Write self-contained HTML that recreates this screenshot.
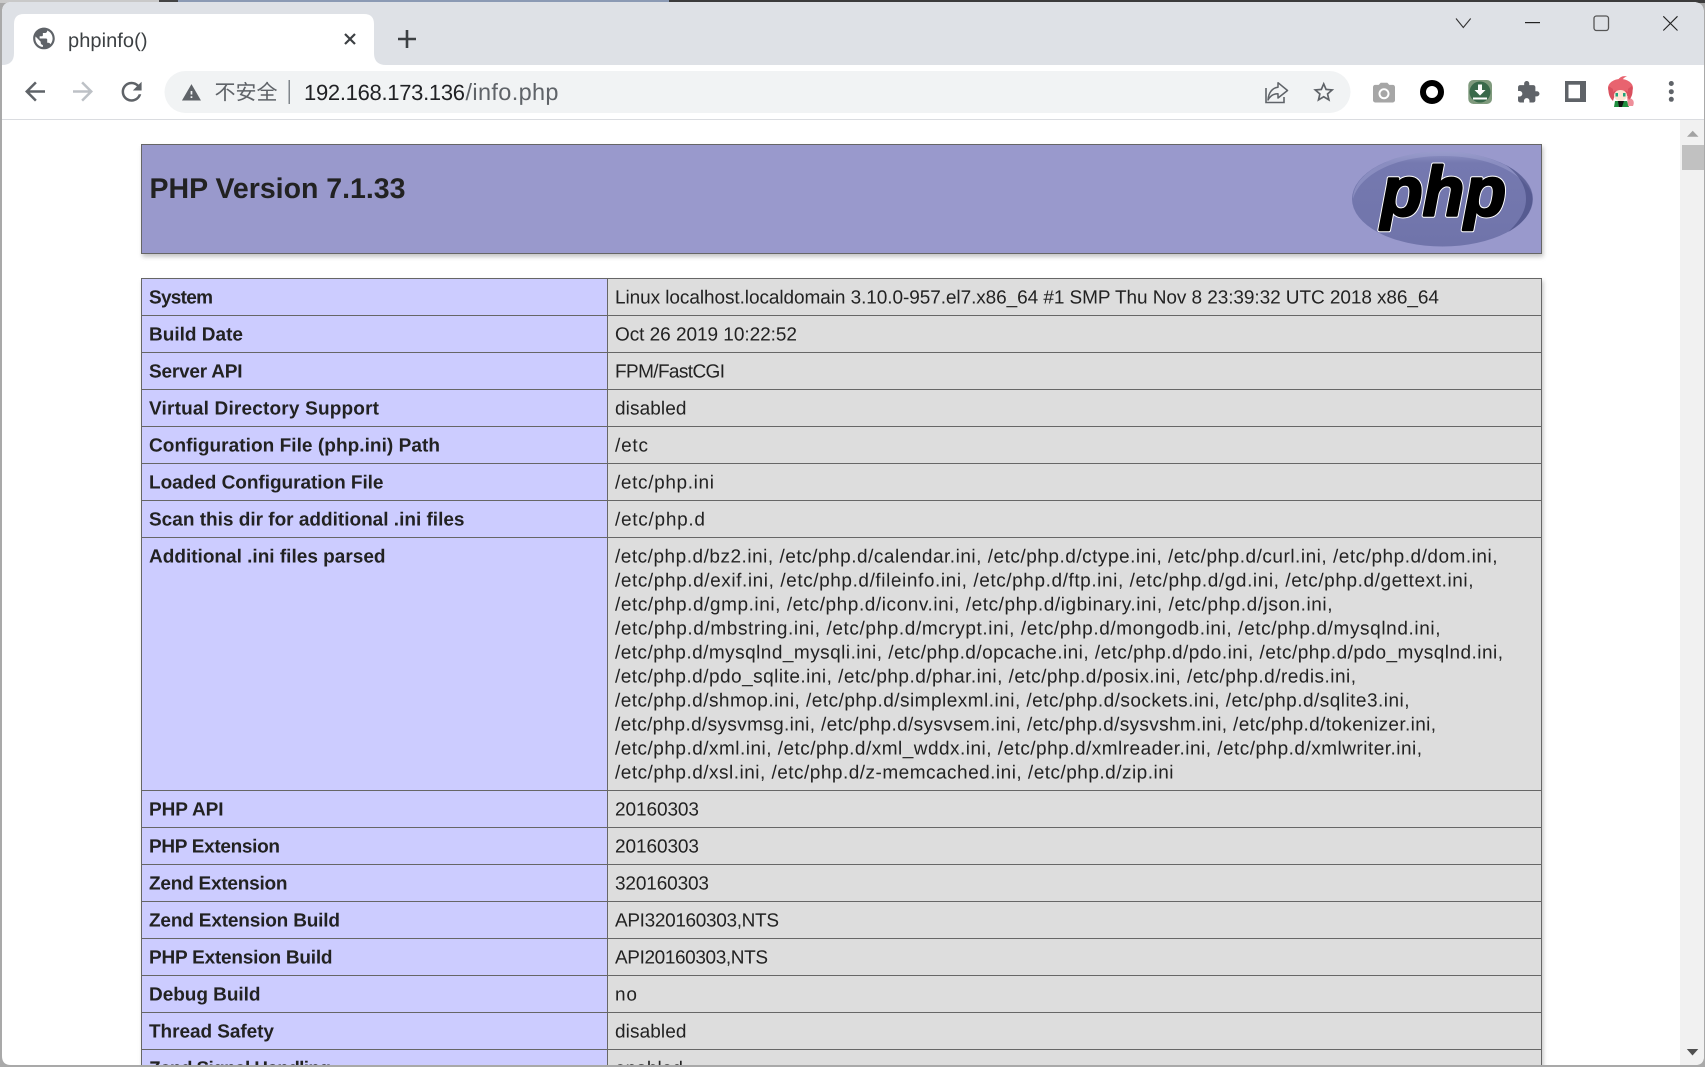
<!DOCTYPE html>
<html lang="en"><head><meta charset="utf-8"><title>phpinfo()</title>
<style>
html,body{margin:0;padding:0;width:1705px;height:1067px;overflow:hidden;background:#a9a9a9}
svg{display:block}
text{font-family:"Liberation Sans","Noto Sans CJK SC",sans-serif;text-rendering:geometricPrecision}
.e{font-size:19px;font-weight:bold;fill:#222;transform:translateY(.7px)}
.v{font-size:19px;fill:#222;transform:translateY(.7px)}
</style></head><body>
<svg width="1705" height="1067" viewBox="0 0 1705 1067" xmlns="http://www.w3.org/2000/svg">
<defs>
<clipPath id="win"><path d="M12 2H1693Q1704 2 1704 13V1056Q1704 1065 1695 1065H11Q2 1065 2 1056V12Q2 2 12 2Z"/></clipPath>
<filter id="sh" x="-2%" y="-5%" width="104%" height="115%"><feDropShadow dx="1.4" dy="2.8" stdDeviation="2" flood-color="#c4c4c4"/></filter>
<linearGradient id="lg" x1="0" y1="0" x2="0" y2="1"><stop offset="0" stop-color="#8f93c4"/><stop offset=".12" stop-color="#7579b0"/><stop offset="1" stop-color="#7074aa"/></linearGradient>
</defs>
<rect x="0" y="0" width="1705" height="1067" fill="#a9a9a9"/>
<rect x="0" y="0" width="159" height="3" fill="#c9c9c9"/>
<rect x="159" y="0" width="19" height="3" fill="#444"/>
<rect x="178" y="0" width="491" height="3" fill="#8b9ab4"/>
<rect x="669" y="0" width="1036" height="3" fill="#3b3b3b"/>
<g clip-path="url(#win)">
<rect x="0" y="0" width="1705" height="1067" fill="#fff"/>
<rect x="0" y="0" width="1705" height="65" fill="#dee1e6"/>
<path d="M2 65Q14 65 14 53V24Q14 14 24 14H364Q374 14 374 24V53Q374 65 386 65Z" fill="#fff"/>
<rect x="0" y="119" width="1705" height="1" fill="#dadce0"/>
<rect x="164.500" y="71" width="1186" height="42" rx="21" fill="#f1f3f4"/>

<!-- tab -->
<path transform="translate(31 25.500) scale(1.08)" fill="#5f6368" d="M12 2C6.480 2 2 6.480 2 12s4.480 10 10 10 10-4.480 10-10S17.520 2 12 2zm-1 17.930c-3.950-.490-7-3.850-7-7.930 0-.620.080-1.210.210-1.790L9 15v1c0 1.100.900 2 2 2v1.930zm6.900-2.540c-.260-.810-1-1.390-1.900-1.390h-1v-3c0-.550-.450-1-1-1H8v-2h2c.550 0 1-.450 1-1V7h2c1.100 0 2-.900 2-2v-.410c2.930 1.190 5 4.060 5 7.410 0 2.080-.800 3.970-2.100 5.390z"/>
<text x="68" y="47" font-size="20" fill="#3c4043" textLength="79.500">phpinfo()</text>
<path d="M345 34L355 44M355 34L345 44" stroke="#3c4043" stroke-width="2.200" fill="none"/>
<path d="M407 30V48M398 39H416" stroke="#3c4043" stroke-width="2.600" fill="none"/>

<!-- nav -->
<path transform="translate(20 76.500) scale(1.25)" fill="#5f6368" d="M20 11H7.830l5.590-5.590L12 4l-8 8 8 8 1.410-1.410L7.830 13H20v-2z"/>
<path transform="translate(98 76.500) scale(-1.25 1.25)" fill="#bdc1c6" d="M20 11H7.830l5.590-5.590L12 4l-8 8 8 8 1.410-1.410L7.830 13H20v-2z"/>
<path transform="translate(116.600 76.700) scale(1.25)" fill="#5f6368" d="M17.650 6.350C16.200 4.900 14.210 4 12 4c-4.420 0-7.990 3.580-7.990 8s3.570 8 7.990 8c3.730 0 6.840-2.550 7.730-6h-2.080c-.820 2.330-3.040 4-5.650 4-3.310 0-6-2.690-6-6s2.690-6 6-6c1.660 0 3.140.690 4.220 1.780L13 11h7V4l-2.350 2.350z"/>

<!-- omnibox -->
<path transform="translate(181.100 82.400) scale(.864)" fill="#5f6368" d="M1 21h22L12 2 1 21zm12-3h-2v-2h2v2zm0-4h-2v-4h2v4z"/>
<text x="214.500" y="99.500" font-size="21" fill="#5f6368" textLength="63">不安全</text>
<rect x="288.500" y="80" width="1.500" height="24" fill="#80868b"/>
<text x="304" y="100" font-size="22" fill="#202124" textLength="161">192.168.173.136</text>
<text x="465.500" y="100" font-size="23.500" fill="#5f6368" textLength="93">/info.php</text>
<path d="M1266 88V102.500H1284V97" fill="none" stroke="#5f6368" stroke-width="1.600"/>
<path d="M1278 82.700L1287.500 90.500L1278 98V93.700C1273 93.700 1270 96 1268 100C1268.500 92.500 1272.500 87.700 1278 87.200Z" fill="none" stroke="#5f6368" stroke-width="1.500" stroke-linejoin="round"/>
<path transform="translate(1311.100 79.600) scale(1.05)" fill="#5f6368" d="M22 9.240l-7.190-.620L12 2 9.190 8.630 2 9.240l5.460 4.730L5.820 21 12 17.270 18.180 21l-1.630-7.030L22 9.240zM12 15.400l-3.760 2.270 1-4.280-3.320-2.880 4.380-.380L12 6.100l1.710 4.040 4.380.380-3.320 2.880 1 4.280L12 15.400z"/>

<!-- extensions -->
<g transform="translate(1370.800 80.500) scale(1.1)" fill="#a6a6a6"><path d="M9 2 7.170 4H4c-1.100 0-2 .900-2 2v12c0 1.100.900 2 2 2h16c1.100 0 2-.900 2-2V6c0-1.100-.900-2-2-2h-3.170L15 2H9zm3 15c-2.760 0-5-2.240-5-5s2.240-5 5-5 5 2.240 5 5-2.240 5-5 5z" fill-rule="evenodd"/><circle cx="12" cy="12" r="3.200"/></g>
<circle cx="1432" cy="92" r="9" fill="none" stroke="#000" stroke-width="6"/>
<rect x="1468.300" y="80" width="23.700" height="24" rx="5" fill="#7f9a7d"/>
<circle cx="1480" cy="92" r="10.500" fill="#39694a"/>
<path d="M1478 84.500H1482V90H1485.500L1480 95.500L1474.500 90H1478Z" fill="#fff"/>
<rect x="1473" y="97.500" width="14" height="2" fill="#fff"/>
<path transform="translate(1516 80) scale(1.02)" fill="#5f6368" d="M20.500 11H19V7c0-1.100-.900-2-2-2h-4V3.500C13 2.120 11.880 1 10.500 1S8 2.120 8 3.500V5H4c-1.100 0-1.990.900-1.990 2v3.800H3.500c1.490 0 2.700 1.210 2.700 2.700s-1.210 2.700-2.700 2.700H2V20c0 1.100.900 2 2 2h3.800v-1.500c0-1.490 1.210-2.700 2.700-2.700 1.490 0 2.700 1.210 2.700 2.700V22H17c1.100 0 2-.900 2-2v-4h1.500c1.380 0 2.500-1.120 2.500-2.500S21.880 11 20.500 11z"/>
<rect x="1565" y="81" width="21" height="21" fill="#5f6368"/>
<rect x="1568.500" y="84.700" width="11.500" height="13.600" fill="#fff"/>

<!-- avatar -->
<path d="M1614 107L1615 101H1627L1629 107Z" fill="#1f8f3f"/>
<path d="M1618 101H1624L1622 107H1619Z" fill="#111"/>
<path d="M1627 97Q1636 99 1633 106L1628 106Z" fill="#ee8f9a"/>
<path d="M1618 80Q1621 75 1627 76.500Q1623 77.500 1622 81Z" fill="#e8636f"/>
<ellipse cx="1620.500" cy="88" rx="12.500" ry="9" fill="#e8636f"/>
<path d="M1608.500 86Q1607.500 96 1613 101L1616 91Z" fill="#d9505e"/>
<path d="M1632 86Q1634 95 1629 100L1625 91Z" fill="#d9505e"/>
<ellipse cx="1620.500" cy="95.500" rx="6.500" ry="5.500" fill="#fde3d3"/>
<path d="M1613 92Q1620 87 1628 92L1628 87L1620 83L1613 87Z" fill="#e8636f"/>
<rect x="1615.500" y="93" width="2.500" height="3.500" fill="#1fa37a"/>
<rect x="1623" y="93" width="2.500" height="3.500" fill="#1fa37a"/>

<circle cx="1671.300" cy="83.500" r="2.500" fill="#5f6368"/>
<circle cx="1671.300" cy="91.700" r="2.500" fill="#5f6368"/>
<circle cx="1671.300" cy="99.300" r="2.500" fill="#5f6368"/>

<!-- window controls -->
<path d="M1456 18.500L1463.300 27.500L1470.700 18.500" fill="none" stroke="#333" stroke-width="1.100"/>
<rect x="1525" y="22" width="15" height="1.200" fill="#222"/>
<rect x="1594" y="16" width="14.500" height="14.500" rx="2.500" fill="none" stroke="#555" stroke-width="1.300"/>
<path d="M1663.300 16.300L1677.500 30.500M1677.500 16.300L1663.300 30.500" fill="none" stroke="#222" stroke-width="1.100"/>

<!-- scrollbar -->
<rect x="1680" y="120" width="25" height="947" fill="#f1f1f1"/>
<path d="M1692.700 130.700L1698.500 136.700H1687Z" fill="#a3a3a3"/>
<rect x="1682" y="145" width="22" height="25" fill="#c1c1c1"/>
<path d="M1686.800 1049H1698.300L1692.500 1055.500Z" fill="#505050"/>

<!-- header -->
<rect x="141" y="144" width="1401" height="110" fill="#99c" filter="url(#sh)"/>
<rect x="141.500" y="144.500" width="1400" height="109" fill="#99c" stroke="#666" stroke-width="1"/>
<text x="149.500" y="198" font-size="28.500" font-weight="bold" fill="#222" textLength="256">PHP Version 7.1.33</text>

<!-- logo -->
<ellipse cx="1442.500" cy="199" rx="90.500" ry="47.500" fill="url(#lg)"/>
<path d="M1353 199C1353 173 1392 151.500 1442.500 151.500C1490 151.500 1527 171 1532 194C1522 172 1488 156 1442.500 156C1396 156 1360 174 1353 199Z" fill="#a3a7d4" opacity=".45"/>
<path d="M1532.500 199C1532.500 212 1523 224 1508 232C1519 222 1526 211 1526 199C1526 186 1519 175 1506 165C1522 174 1532.500 186 1532.500 199Z" fill="#45497f" opacity=".6"/>
<text x="1381" y="215.500" font-size="70" font-weight="bold" font-style="italic" fill="#fff" stroke="#fff" stroke-width="4.500" stroke-linejoin="round" textLength="125" lengthAdjust="spacingAndGlyphs">php</text>
<text x="1381" y="215.500" font-size="70" font-weight="bold" font-style="italic" fill="#000" stroke="#000" stroke-width="2.500" stroke-linejoin="round" textLength="125" lengthAdjust="spacingAndGlyphs">php</text>

<!-- table -->
<rect x="141" y="278" width="1401" height="800" fill="#ddd" filter="url(#sh)"/>
<rect x="141" y="278" width="466" height="800" fill="#ccf"/>
<rect x="607" y="278" width="935" height="800" fill="#ddd"/>
<path d="M141 278.500H1542M141 315.500H1542M141 352.500H1542M141 389.500H1542M141 426.500H1542M141 463.500H1542M141 500.500H1542M141 537.500H1542M141 790.500H1542M141 827.500H1542M141 864.500H1542M141 901.500H1542M141 938.500H1542M141 975.500H1542M141 1012.500H1542M141 1049.500H1542M141.500 278V1067M607.500 278V1067M1541.500 278V1067" stroke="#666" stroke-width="1" fill="none"/>

<text class="e" x="149" y="303" textLength="64">System</text>
<text class="e" x="149" y="340" textLength="94">Build Date</text>
<text class="e" x="149" y="377" textLength="93.500">Server API</text>
<text class="e" x="149" y="414" textLength="230">Virtual Directory Support</text>
<text class="e" x="149" y="451" textLength="291">Configuration File (php.ini) Path</text>
<text class="e" x="149" y="488" textLength="234.500">Loaded Configuration File</text>
<text class="e" x="149" y="525" textLength="315.500">Scan this dir for additional .ini files</text>
<text class="e" x="149" y="562" textLength="236.500">Additional .ini files parsed</text>
<text class="e" x="149" y="815" textLength="74.500">PHP API</text>
<text class="e" x="149" y="852" textLength="131">PHP Extension</text>
<text class="e" x="149" y="889" textLength="138.500">Zend Extension</text>
<text class="e" x="149" y="926" textLength="191">Zend Extension Build</text>
<text class="e" x="149" y="963" textLength="183.500">PHP Extension Build</text>
<text class="e" x="149" y="1000" textLength="111.500">Debug Build</text>
<text class="e" x="149" y="1037" textLength="125">Thread Safety</text>
<text class="e" x="149" y="1074" textLength="182">Zend Signal Handling</text>

<text class="v" x="615" y="303" textLength="824">Linux localhost.localdomain 3.10.0-957.el7.x86_64 #1 SMP Thu Nov 8 23:39:32 UTC 2018 x86_64</text>
<text class="v" x="615" y="340" textLength="182">Oct 26 2019 10:22:52</text>
<text class="v" x="615" y="377" textLength="110">FPM/FastCGI</text>
<text class="v" x="615" y="414" textLength="71.500">disabled</text>
<text class="v" x="615" y="451" textLength="33">/etc</text>
<text class="v" x="615" y="488" textLength="99">/etc/php.ini</text>
<text class="v" x="615" y="525" textLength="90">/etc/php.d</text>
<text class="v" x="615" y="562" textLength="882.500">/etc/php.d/bz2.ini, /etc/php.d/calendar.ini, /etc/php.d/ctype.ini, /etc/php.d/curl.ini, /etc/php.d/dom.ini,</text>
<text class="v" x="615" y="586" textLength="858.500">/etc/php.d/exif.ini, /etc/php.d/fileinfo.ini, /etc/php.d/ftp.ini, /etc/php.d/gd.ini, /etc/php.d/gettext.ini,</text>
<text class="v" x="615" y="610" textLength="717.500">/etc/php.d/gmp.ini, /etc/php.d/iconv.ini, /etc/php.d/igbinary.ini, /etc/php.d/json.ini,</text>
<text class="v" x="615" y="634" textLength="825.500">/etc/php.d/mbstring.ini, /etc/php.d/mcrypt.ini, /etc/php.d/mongodb.ini, /etc/php.d/mysqlnd.ini,</text>
<text class="v" x="615" y="658" textLength="888">/etc/php.d/mysqlnd_mysqli.ini, /etc/php.d/opcache.ini, /etc/php.d/pdo.ini, /etc/php.d/pdo_mysqlnd.ini,</text>
<text class="v" x="615" y="682" textLength="741">/etc/php.d/pdo_sqlite.ini, /etc/php.d/phar.ini, /etc/php.d/posix.ini, /etc/php.d/redis.ini,</text>
<text class="v" x="615" y="706" textLength="794.500">/etc/php.d/shmop.ini, /etc/php.d/simplexml.ini, /etc/php.d/sockets.ini, /etc/php.d/sqlite3.ini,</text>
<text class="v" x="615" y="730" textLength="821">/etc/php.d/sysvmsg.ini, /etc/php.d/sysvsem.ini, /etc/php.d/sysvshm.ini, /etc/php.d/tokenizer.ini,</text>
<text class="v" x="615" y="754" textLength="807">/etc/php.d/xml.ini, /etc/php.d/xml_wddx.ini, /etc/php.d/xmlreader.ini, /etc/php.d/xmlwriter.ini,</text>
<text class="v" x="615" y="778" textLength="558.500">/etc/php.d/xsl.ini, /etc/php.d/z-memcached.ini, /etc/php.d/zip.ini</text>
<text class="v" x="615" y="815" textLength="84">20160303</text>
<text class="v" x="615" y="852" textLength="84">20160303</text>
<text class="v" x="615" y="889" textLength="94">320160303</text>
<text class="v" x="615" y="926" textLength="164">API320160303,NTS</text>
<text class="v" x="615" y="963" textLength="153">API20160303,NTS</text>
<text class="v" x="615" y="1000" textLength="22">no</text>
<text class="v" x="615" y="1037" textLength="71.500">disabled</text>
<text class="v" x="615" y="1074" textLength="68">enabled</text>
</g>
</svg>
</body></html>
